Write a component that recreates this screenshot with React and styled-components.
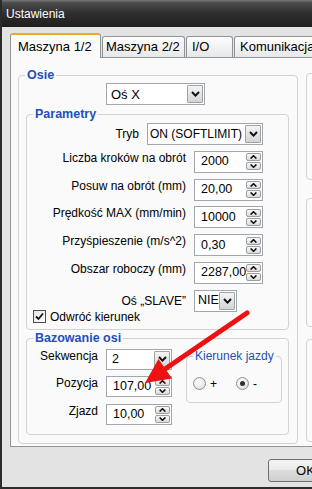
import React from 'react';
import styled, { createGlobalStyle } from 'styled-components';

const GlobalStyle = createGlobalStyle`
  body {
    margin: 0;
    background: #fff;
    font-family: "Liberation Sans", Arial, sans-serif;
    color: #000;
  }
`;

const Viewport = styled.div`
  position: relative;
  width: 312px;
  height: 489px;
  overflow: hidden;
`;

const Window = styled.div`
  width: 430px;
  height: 489px;
  box-sizing: border-box;
  display: flex;
  flex-direction: column;
  background: #e3e3e3;
  border-left: 2px solid #2c2c2c;
  border-bottom: 2px solid #2c2c2c;
`;

const TitleBar = styled.div`
  height: 27px;
  flex-shrink: 0;
  display: flex;
  align-items: center;
  padding-left: 4px;
  background: linear-gradient(#777 0, #4b4b4b 3px, #303030 13px, #1e1e1e 100%);
  color: #fff;
  font-size: 12px;
`;

const Body = styled.div`
  flex: 1;
  display: flex;
  flex-direction: column;
  padding: 6px 8px 0 8px;
`;

const TabStrip = styled.div`
  position: relative;
  z-index: 1;
  display: flex;
  align-items: flex-end;
  gap: 1px;
  height: 24px;
`;

const Tab = styled.div`
  box-sizing: border-box;
  width: ${p => p.$width}px;
  height: ${p => (p.$active ? 25 : 21)}px;
  margin-bottom: ${p => (p.$active ? -1 : 0)}px;
  padding: ${p => (p.$active ? 4 : 2)}px 0 0 ${p => p.$pad}px;
  border: 1px solid #8e959b;
  border-top: ${p => (p.$active ? '2px solid #f0a636' : '1px solid #8e959b')};
  border-bottom: none;
  border-radius: 3px 3px 0 0;
  background: ${p => (p.$active ? '#fafafa' : 'linear-gradient(#fdfdfd, #e8e8e8)')};
  font-size: 13px;
  line-height: 16px;
  white-space: nowrap;
  overflow: hidden;
`;

const Panel = styled.div`
  box-sizing: border-box;
  height: 390px;
  display: flex;
  align-items: flex-start;
  gap: 8px;
  padding: 17px 0 0 7px;
  border: 1px solid #8e959b;
  background: #fafafa;
`;

const Group = styled.div`
  box-sizing: border-box;
  display: flex;
  flex-direction: column;
  border: 1px solid #d2d2d2;
  border-radius: 4px;
`;

const AxesGroup = styled(Group)`
  width: 280px;
`;

const InnerGroup = styled(Group)`
  margin: ${p => p.$top}px 8px ${p => p.$bottom || 0}px 7px;
`;

const DirectionGroup = styled(Group)`
  width: 96px;
  height: 47px;
  margin: 7px 0 0 14px;
`;

const Legend = styled.div`
  align-self: flex-start;
  margin: -8px 0 0 6px;
  padding: 0 2px;
  background: #fafafa;
  color: #1f4fb8;
  font-size: ${p => (p.$bold ? 12.5 : 12)}px;
  font-weight: ${p => (p.$bold ? 700 : 400)};
  line-height: 14px;
`;

const AxisRow = styled.div`
  display: flex;
  padding-left: 87px;
  margin-top: 1px;
`;

const RowList = styled.div`
  display: flex;
  flex-direction: column;
  gap: 5.8px;
  margin-top: 2px;
  padding-right: 25px;
`;

const Row = styled.div`
  display: flex;
  justify-content: flex-end;
  align-items: ${p => (p.$center ? 'center' : 'flex-start')};
  gap: 8px;
`;

const Label = styled.span`
  font-size: 12px;
  line-height: 14px;
  white-space: nowrap;
  text-align: right;
`;

const Slot = styled.div`
  width: ${p => p.$width}px;
  display: flex;
`;

const Field = styled.div`
  box-sizing: border-box;
  width: ${p => p.$width}px;
  height: ${p => p.$height || 22}px;
  display: flex;
  align-items: center;
  border: 1px solid #a2a7ad;
  background: #fff;
`;

const Value = styled.span`
  flex: 1;
  min-width: 0;
  overflow: hidden;
  padding-left: ${p => p.$pad || 5}px;
  font-size: ${p => p.$size || 13}px;
  line-height: 15px;
  white-space: nowrap;
`;

const DropButton = styled.div`
  box-sizing: border-box;
  align-self: stretch;
  width: 16px;
  margin: 1px 1px 1px 0;
  display: flex;
  align-items: center;
  justify-content: center;
  border: 1px solid #9ea3a8;
  border-radius: 1px;
  background: linear-gradient(#f4f4f4, #d4d4d4);
`;

const Spinner = styled.div`
  display: flex;
  flex-direction: column;
  gap: 1px;
  margin-right: 1px;
`;

const SpinButton = styled.div`
  box-sizing: border-box;
  width: 15px;
  height: 8px;
  display: flex;
  align-items: center;
  justify-content: center;
  border: 1px solid #9a9fa4;
  border-radius: 2px;
  background: linear-gradient(#f8f8f8, #dadada);
`;

const CheckRow = styled.label`
  display: flex;
  align-items: center;
  gap: 4px;
  margin: -2px 0 5px 6px;
  font-size: 12px;
  line-height: 14px;
`;

const CheckBox = styled.span`
  box-sizing: border-box;
  width: 13px;
  height: 13px;
  display: flex;
  align-items: center;
  justify-content: center;
  border: 1px solid #4d4d4d;
  background: linear-gradient(135deg, #e4e4e4, #fff);
`;

const HomingBody = styled.div`
  display: flex;
  align-items: flex-start;
  margin: 4px 0 9px;
`;

const HomingGrid = styled.div`
  display: grid;
  grid-template-columns: 71px 66px;
  grid-auto-rows: 21px;
  column-gap: 8px;
  row-gap: 6.5px;
  justify-items: end;

  & > :nth-child(2n) {
    justify-self: start;
  }
`;

const RadioRow = styled.div`
  display: flex;
  margin: 14px 0 0 6px;
`;

const RadioOption = styled.label`
  width: 43px;
  display: flex;
  align-items: center;
  gap: 4px;
  font-size: 12px;
  line-height: 14px;
`;

const Radio = styled.span`
  box-sizing: border-box;
  width: 13px;
  height: 13px;
  display: flex;
  align-items: center;
  justify-content: center;
  border: 1px solid #8b8f94;
  border-radius: 50%;
  background: radial-gradient(circle at 40% 35%, #fff, #d9d9d9);

  &::after {
    content: '';
    display: ${p => (p.$checked ? 'block' : 'none')};
    width: 5px;
    height: 5px;
    border-radius: 50%;
    background: #2f2f2f;
  }
`;

const SideColumn = styled.div`
  flex: 1;
  display: flex;
  flex-direction: column;
  margin-top: -2px;
`;

const SideBox = styled.div`
  height: ${p => p.$height}px;
  margin-top: ${p => p.$gap || 0}px;
  border: 1px solid #d2d2d2;
  border-radius: 4px;
`;

const Footer = styled.div`
  display: flex;
  justify-content: flex-end;
  gap: 4px;
  margin-top: 12px;
`;

const Button = styled.button`
  width: 75px;
  height: 23px;
  padding: 0;
  border: 1px solid #707070;
  border-radius: 3px;
  background: linear-gradient(#f3f3f3 0, #ebebeb 50%, #dcdcdc 50%, #cfcfcf 100%);
  font-family: inherit;
  font-size: 13px;
  color: #000;
`;

const Overlay = styled.svg`
  position: absolute;
  left: 0;
  top: 0;
  pointer-events: none;
`;

const Chevron = ({ up }) => (
  <svg width="7" height="4" viewBox="0 0 7 4">
    <path
      d={up ? 'M0.6 3.6 L3.5 0.7 L6.4 3.6' : 'M0.6 0.4 L3.5 3.3 L6.4 0.4'}
      stroke="#111"
      strokeWidth="1.5"
      fill="none"
    />
  </svg>
);

const Select = ({ value, width, height, pad, size }) => (
  <Field $width={width} $height={height}>
    <Value $pad={pad} $size={size}>{value}</Value>
    <DropButton>
      <svg width="9" height="6" viewBox="0 0 9 6">
        <path d="M1 1 L4.5 4.6 L8 1" stroke="#111" strokeWidth="2" fill="none" />
      </svg>
    </DropButton>
  </Field>
);

const SpinBox = ({ value, width, height }) => (
  <Field $width={width} $height={height}>
    <Value $pad={6} $size={12.5}>{value}</Value>
    <Spinner>
      <SpinButton><Chevron up /></SpinButton>
      <SpinButton><Chevron /></SpinButton>
    </Spinner>
  </Field>
);

const params = [
  ['Liczba kroków na obrót', '2000'],
  ['Posuw na obrót (mm)', '20,00'],
  ['Prędkość MAX (mm/min)', '10000'],
  ['Przyśpieszenie (m/s^2)', '0,30'],
  ['Obszar roboczy (mm)', '2287,00'],
];

const tabs = [
  { label: 'Maszyna 1/2', width: 91, pad: 7, active: true },
  { label: 'Maszyna 2/2', width: 83, pad: 3 },
  { label: 'I/O', width: 47, pad: 5 },
  { label: 'Komunikacja', width: 96, pad: 5 },
];

export default function App() {
  return (
    <Viewport>
      <GlobalStyle />
      <Window>
        <TitleBar>Ustawienia</TitleBar>
        <Body>
          <TabStrip>
            {tabs.map(t => (
              <Tab key={t.label} $width={t.width} $pad={t.pad} $active={t.active}>
                {t.label}
              </Tab>
            ))}
          </TabStrip>
          <Panel>
            <AxesGroup>
              <Legend $bold>Osie</Legend>
              <AxisRow>
                <Select value="Oś X" width={99} pad={4} />
              </AxisRow>

              <InnerGroup $top={9}>
                <Legend $bold>Parametry</Legend>
                <RowList>
                  <Row $center>
                    <Label>Tryb</Label>
                    <Slot $width={116}>
                      <Select value="ON (SOFTLIMIT)" width={116} pad={2} size={12} />
                    </Slot>
                  </Row>
                  {params.map(([label, value]) => (
                    <Row key={label}>
                      <Label>{label}</Label>
                      <Slot $width={69}>
                        <SpinBox value={value} width={69} />
                      </Slot>
                    </Row>
                  ))}
                  <Row $center>
                    <Label>Oś „SLAVE”</Label>
                    <Slot $width={69}>
                      <Select value="NIE" width={43} pad={3} size={12.5} />
                    </Slot>
                  </Row>
                </RowList>
                <CheckRow>
                  <CheckBox>
                    <svg width="9" height="9" viewBox="0 0 9 9">
                      <path d="M1 4.5 L3.5 7 L8 1.5" stroke="#111" strokeWidth="1.8" fill="none" />
                    </svg>
                  </CheckBox>
                  Odwróć kierunek
                </CheckRow>
              </InnerGroup>

              <InnerGroup $top={8} $bottom={8}>
                <Legend $bold>Bazowanie osi</Legend>
                <HomingBody>
                  <HomingGrid>
                    <Label>Sekwencja</Label>
                    <Select value="2" width={66} height={21} size={12.5} />
                    <Label>Pozycja</Label>
                    <SpinBox value="107,00" width={66} height={21} />
                    <Label>Zjazd</Label>
                    <SpinBox value="10,00" width={66} height={21} />
                  </HomingGrid>
                  <DirectionGroup>
                    <Legend>Kierunek jazdy</Legend>
                    <RadioRow>
                      <RadioOption><Radio />+</RadioOption>
                      <RadioOption><Radio $checked />-</RadioOption>
                    </RadioRow>
                  </DirectionGroup>
                </HomingBody>
              </InnerGroup>
            </AxesGroup>

            <SideColumn>
              <SideBox $height={105} />
              <SideBox $height={127} $gap={18} />
              <SideBox $height={101} $gap={12} />
            </SideColumn>
          </Panel>
          <Footer>
            <Button>OK</Button>
            <Button>Anuluj</Button>
          </Footer>
        </Body>
      </Window>

      <Overlay width="312" height="489" viewBox="0 0 312 489">
        <line x1="247" y1="313" x2="165" y2="369" stroke="#ee1111" strokeWidth="5" strokeLinecap="round" />
        <polygon points="145,383 158.5,359 172,378.5" fill="#ee1111" />
      </Overlay>
    </Viewport>
  );
}
